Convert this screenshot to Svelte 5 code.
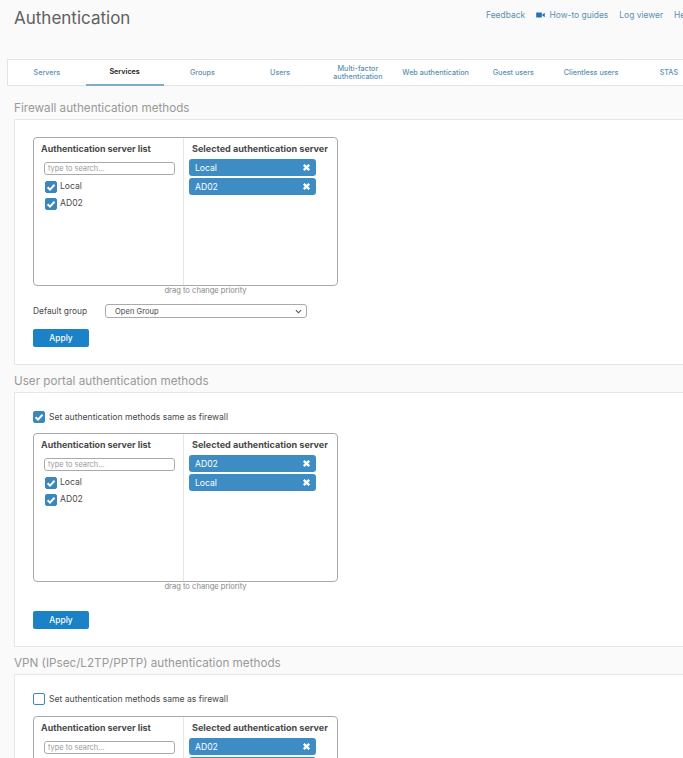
<script>
    const tabs = ['Servers', 'Services', 'Groups', 'Users', 'Multi-factor authentication', 'Web authentication', 'Guest users', 'Clientless users', 'STAS'];
    const servers = ['Local', 'AD02'];
</script>

{#snippet check(on)}
    <span class="check" class:on>
        {#if on}
            <svg viewBox="0 0 12 12" width="12" height="12"><path d="M2.6 6.2 5 8.6 9.5 3.8" fill="none" stroke="#fff" stroke-width="2"/></svg>
        {/if}
    </span>
{/snippet}

{#snippet serverBox(selected)}
    <div class="box">
        <div class="col-left">
            <div class="col-title">Authentication server list</div>
            <input class="search" type="text" placeholder="type to search..." />
            {#each servers as name}
                <div class="server">{@render check(true)}<span>{name}</span></div>
            {/each}
        </div>
        <div class="col-right">
            <div class="col-title">Selected authentication server</div>
            {#each selected as name}
                <div class="chip">
                    <span>{name}</span>
                    <svg viewBox="0 0 10 10" width="9" height="9"><path d="M2 2 8 8M8 2 2 8" stroke="#fff" stroke-width="2.6" fill="none"/></svg>
                </div>
            {/each}
        </div>
    </div>
{/snippet}

<div class="page">
    <header>
        <h1>Authentication</h1>
        <nav>
            <span>Feedback</span>
            <span class="guides">
                <svg viewBox="0 0 10 7" width="9" height="6"><path d="M0 .5h6.5v6H0zM7 2.8 10 .8v5.4L7 4.2z" fill="#2272b8"/></svg>
                How-to guides
            </span>
            <span>Log viewer</span>
            <span>Help</span>
        </nav>
    </header>

    <div class="tabs">
        {#each tabs as tab}
            <div class="tab" class:active={tab === 'Services'}>{tab}</div>
        {/each}
    </div>

    <h2 class="first">Firewall authentication methods</h2>
    <section class="card">
        {@render serverBox(['Local', 'AD02'])}
        <div class="hint">drag to change priority</div>
        <div class="group-row">
            <span class="group-label">Default group</span>
            <div class="select">
                <span>Open Group</span>
                <svg viewBox="0 0 8 5" width="7" height="5"><path d="M1 1 4 4 7 1" fill="none" stroke="#555" stroke-width="1.2"/></svg>
            </div>
        </div>
        <button class="apply">Apply</button>
    </section>

    <h2>User portal authentication methods</h2>
    <section class="card">
        <div class="same">{@render check(true)}<span>Set authentication methods same as firewall</span></div>
        {@render serverBox(['AD02', 'Local'])}
        <div class="hint">drag to change priority</div>
        <button class="apply spaced">Apply</button>
    </section>

    <h2>VPN (IPsec/L2TP/PPTP) authentication methods</h2>
    <section class="card last">
        <div class="same">{@render check(false)}<span>Set authentication methods same as firewall</span></div>
        {@render serverBox(['AD02', 'Local'])}
    </section>
</div>

<style>
    :global(body) {
      background: #fafafa;
      overflow: hidden;
    }

    .page {
      width: 760px;
      height: 758px;
      overflow: hidden;
      font-family: Inter, "Liberation Sans", sans-serif;
      color: #4a4a4a;
    }

    header {
      height: 59px;
      position: relative;
    }

    h1 {
      margin: 0;
      padding: 8px 0 0 14px;
      font-size: 17px;
      line-height: 20px;
      font-weight: 400;
      color: #606060;
    }

    nav {
      position: absolute;
      left: 486px;
      top: 9px;
      display: flex;
      gap: 11px;
      font-size: 8.45px;
      line-height: 12px;
      color: #5a90b3;
      white-space: nowrap;
    }

    .guides svg {
      margin-right: 2px;
    }

    .tabs {
      margin-left: 7px;
      display: flex;
      height: 27px;
      box-sizing: border-box;
      background: #fff;
      border: 1px solid #e4e4e4;
      border-right: 0;
      width: 753px;
    }

    .tab {
      flex: 0 0 77.75px;
      box-sizing: border-box;
      display: flex;
      align-items: center;
      justify-content: center;
      text-align: center;
      font-size: 7.2px;
      line-height: 8px;
      font-weight: 500;
      color: #5a90b3;
    }

    .tab.active {
      color: #222;
      font-weight: 600;
      border-bottom: 2px solid #7fadc6;
      margin-bottom: -1px;
    }

    h2 {
      margin: 9px 0 0 14px;
      font-size: 11.7px;
      line-height: 15px;
      font-weight: 400;
      color: #999;
    }

    h2.first {
      margin-top: 15px;
    }

    .card {
      margin: 3px 0 0 14px;
      background: #fff;
      border: 1px solid #e6e6e6;
      box-sizing: border-box;
      padding: 17px 18px 17px 18px;
    }

    .same {
      display: flex;
      align-items: center;
      gap: 4px;
      height: 12px;
      margin: 1px 0 10px;
      font-size: 8.6px;
    }

    .last .same {
      margin-bottom: 11px;
    }

    .box {
      width: 305px;
      height: 149px;
      box-sizing: border-box;
      border: 1px solid #aaa;
      border-radius: 4px;
      display: flex;
    }

    .col-left {
      width: 150px;
      box-sizing: border-box;
      border-right: 1px solid #e6e6e6;
      padding: 5px 0 0 7px;
    }

    .col-right {
      padding: 5px 0 0 5px;
      flex: 1;
    }

    .col-title {
      font-size: 8.9px;
      line-height: 11px;
      font-weight: 700;
      color: #4a4a4a;
      white-space: nowrap;
    }

    .col-right .col-title {
      padding-left: 3px;
      margin-bottom: 5px;
      font-size: 9.05px;
    }

    .search {
      display: block;
      margin: 8px 0 5px 3px;
      width: 131px;
      height: 13px;
      box-sizing: border-box;
      border: 1px solid #aaa;
      border-radius: 3px;
      padding: 0 3px;
      font: 7.4px Inter, sans-serif;
      outline: none;
    }

    .search::placeholder {
      color: #999;
    }

    .server {
      display: flex;
      align-items: flex-start;
      gap: 3px;
      height: 17px;
      padding-left: 4px;
      font-size: 8.6px;
      line-height: 11px;
    }

    .server span:last-child {
      margin-top: 1px;
    }

    .server .check {
      margin-top: 1px;
    }

    .check {
      width: 12px;
      height: 12px;
      box-sizing: border-box;
      flex: none;
      border: 1px solid #3a87bd;
      border-radius: 2px;
      display: block;
      background: #fff;
    }

    .check.on {
      background: #3a87bd;
    }

    .check svg {
      display: block;
      margin: -1px;
    }

    .chip {
      width: 127px;
      height: 17px;
      margin-bottom: 2px;
      box-sizing: border-box;
      border-radius: 3px;
      background: #3d8dc4;
      color: #fff;
      display: flex;
      align-items: center;
      justify-content: space-between;
      padding: 0 5px 0 6px;
      font-size: 8.6px;
    }

    .hint {
      width: 345px;
      text-align: center;
      font-size: 7.6px;
      line-height: 9px;
      color: #888;
    }

    .group-row {
      display: flex;
      align-items: center;
      margin-top: 9px;
    }

    .group-label {
      width: 72px;
      font-size: 8.4px;
    }

    .select {
      width: 202px;
      height: 14px;
      box-sizing: border-box;
      border: 1px solid #aaa;
      border-radius: 3px;
      display: flex;
      align-items: center;
      justify-content: space-between;
      padding: 0 4px 0 9px;
      font-size: 7.6px;
    }

    .apply {
      display: block;
      margin-top: 11px;
      width: 56px;
      height: 18px;
      padding: 0;
      border: 0;
      border-radius: 2px;
      background: #1c82c8;
      color: #fff;
      font: 500 8.4px Inter, sans-serif;
    }

    .apply.spaced {
      margin-top: 20px;
    }
</style>
